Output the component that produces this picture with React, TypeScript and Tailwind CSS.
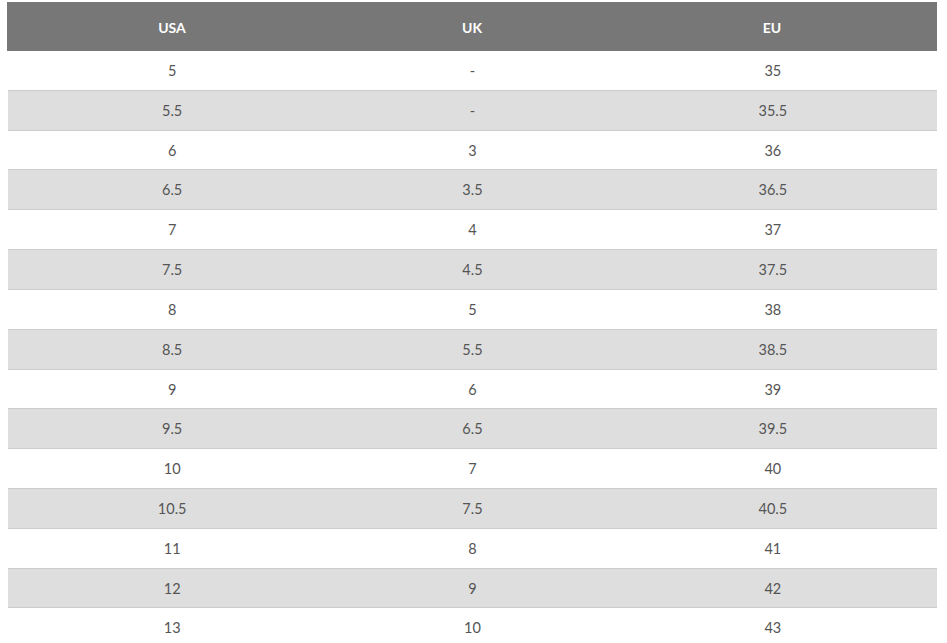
const rows: [string, string, string][] = [
  ["5", "-", "35"],
  ["5.5", "-", "35.5"],
  ["6", "3", "36"],
  ["6.5", "3.5", "36.5"],
  ["7", "4", "37"],
  ["7.5", "4.5", "37.5"],
  ["8", "5", "38"],
  ["8.5", "5.5", "38.5"],
  ["9", "6", "39"],
  ["9.5", "6.5", "39.5"],
  ["10", "7", "40"],
  ["10.5", "7.5", "40.5"],
  ["11", "8", "41"],
  ["12", "9", "42"],
  ["13", "10", "43"],
];

export default function App() {
  return (
    <div className="min-h-screen bg-white pt-[2px] font-['Lato','Liberation_Sans',sans-serif]">
      <div className="mx-[7px] w-[930px]">
        {/* header */}
        <div className="grid h-[49px] grid-cols-3 items-center bg-[#777777] px-[15px] pt-[1px] text-[14px] font-bold text-white">
          <div className="text-center">USA</div>
          <div className="text-center">UK</div>
          <div className="text-center">EU</div>
        </div>
        {rows.map((r, i) => (
          <div
            key={i}
            className={`ml-[1px] grid h-[39.82px] grid-cols-3 items-center border-b border-[#cccccc] px-[14px] pt-[1px] text-[14.5px] text-[#555555] ${
              i % 2 === 1 ? "bg-[#dedede]" : "bg-white"
            }`}
          >
            <div className="text-center">{r[0]}</div>
            <div className="text-center">{r[1]}</div>
            <div className="text-center">{r[2]}</div>
          </div>
        ))}
      </div>
    </div>
  );
}
